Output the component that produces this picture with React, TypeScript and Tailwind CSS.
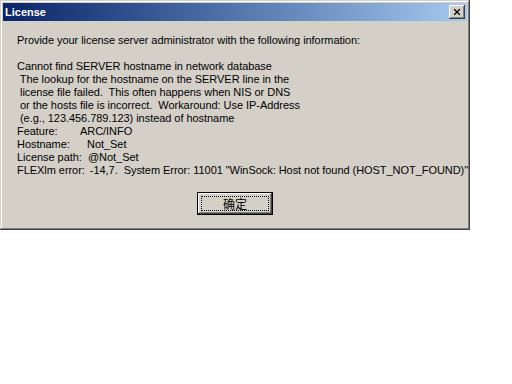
import { X } from 'lucide-react'

const lines = [
  'Cannot find SERVER hostname in network database',
  ' The lookup for the hostname on the SERVER line in the',
  ' license file failed.  This often happens when NIS or DNS',
  ' or the hosts file is incorrect.  Workaround: Use IP-Address',
  ' (e.g., 123.456.789.123) instead of hostname',
]

const fields: [string, string, string][] = [
  ['Feature:', 'ARC/INFO', 'w-[63px]'],
  ['Hostname:', 'Not_Set', 'w-[70px]'],
  ['License path:', '@Not_Set', 'w-[71px]'],
  ['FLEXlm error:', '-14,7.  System Error: 11001 "WinSock: Host not found (HOST_NOT_FOUND)"', 'mr-[5px]'],
]

export default function App() {
  return (
    <div className="w-[512px] h-[384px] bg-white font-['Liberation_Sans',sans-serif]">
      <div className="w-[470px] h-[230px] bg-[#d4d0c8] p-[3px] flex flex-col shadow-[inset_-1px_-1px_#404040,inset_1px_1px_#d4d0c8,inset_-2px_-2px_#808080,inset_2px_2px_#ffffff]">
        <div className="h-[18px] flex items-center justify-between pl-[2px] pr-[2px] bg-gradient-to-r from-[#0a246a] to-[#a6caf0]">
          <span className="text-white font-bold text-[11px] leading-none">License</span>
          <div className="w-[16px] h-[14px] bg-[#d4d0c8] flex items-center justify-center shadow-[inset_-1px_-1px_#404040,inset_1px_1px_#ffffff,inset_-2px_-2px_#808080]">
            <X size={10} strokeWidth={3} className="text-black" />
          </div>
        </div>
        <div className="pl-[14px] pt-[13px] text-[11px] leading-[13px] text-black whitespace-pre tracking-[-0.05px]">
          <div>Provide your license server administrator with the following information:</div>
          <div className="h-[13px]" />
          {lines.map((l) => (
            <div key={l}>{l}</div>
          ))}
          {fields.map(([k, v, w]) => (
            <div key={k} className="flex">
              <span className={w}>{k}</span>
              <span>{v}</span>
            </div>
          ))}
        </div>
        <div className="flex justify-center pt-[15px]">
          <div className="w-[76px] h-[23px] border border-black bg-[#d4d0c8] shadow-[inset_-1px_-1px_#404040,inset_1px_1px_#ffffff,inset_-2px_-2px_#808080] p-[3px]">
            <div className="h-full border border-dotted border-black flex items-center justify-center text-[12px] font-['Noto_Sans_CJK_SC',sans-serif] leading-none">
              确定
            </div>
          </div>
        </div>
      </div>
    </div>
  )
}
